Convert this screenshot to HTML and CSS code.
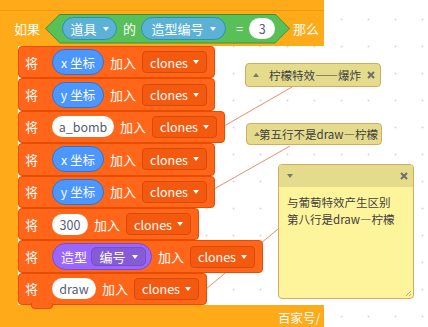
FILE: index.html
```html
<!DOCTYPE html>
<html lang="zh">
<head>
  <meta charset="UTF-8" />
  <title>Scratch 脚本</title>
  <link rel="stylesheet" href="styles.css">
</head>
<body>
  <div class="workspace">
    <svg class="links" width="428" height="327">
      <line x1="292" y1="87" x2="205" y2="137" />
      <line x1="290" y1="146" x2="200" y2="197" />
      <line x1="284" y1="224" x2="200" y2="294" />
    </svg>

    <div class="script">
      <div class="top-stub"></div>

      <div class="c-head">
        <span class="label">如果</span>
        <div class="cond">
          <div class="cond-in">
            <div class="sense w55">道具<i class="arrow"></i></div>
            <span class="label of">的</span>
            <div class="sense w85">造型编号<i class="arrow"></i></div>
            <span class="label eq">=</span>
            <div class="num">3</div>
          </div>
        </div>
        <span class="label then">那么</span>
      </div>

      <div class="c-mid">
        <div class="c-arm"></div>
        <div class="stack">
          <div class="block">
            <span class="label put">将</span>
            <div class="rep w52">x 坐标</div>
            <span class="label add">加入</span>
            <div class="dd">clones<i class="arrow"></i></div>
          </div>
          <div class="block">
            <span class="label put">将</span>
            <div class="rep w52">y 坐标</div>
            <span class="label add">加入</span>
            <div class="dd">clones<i class="arrow"></i></div>
          </div>
          <div class="block">
            <span class="label put">将</span>
            <div class="txt w62">a_bomb</div>
            <span class="label add">加入</span>
            <div class="dd">clones<i class="arrow"></i></div>
          </div>
          <div class="block">
            <span class="label put">将</span>
            <div class="rep w52">x 坐标</div>
            <span class="label add">加入</span>
            <div class="dd">clones<i class="arrow"></i></div>
          </div>
          <div class="block">
            <span class="label put">将</span>
            <div class="rep w52">y 坐标</div>
            <span class="label add">加入</span>
            <div class="dd">clones<i class="arrow"></i></div>
          </div>
          <div class="block">
            <span class="label put">将</span>
            <div class="txt w36">300</div>
            <span class="label add">加入</span>
            <div class="dd">clones<i class="arrow"></i></div>
          </div>
          <div class="block">
            <span class="label put">将</span>
            <div class="looks">
              <span>造型</span>
              <div class="looks-dd">编号<i class="arrow"></i></div>
            </div>
            <span class="label add">加入</span>
            <div class="dd">clones<i class="arrow"></i></div>
          </div>
          <div class="block last">
            <span class="label put">将</span>
            <div class="txt w44">draw</div>
            <span class="label add">加入</span>
            <div class="dd">clones<i class="arrow"></i></div>
          </div>
        </div>
      </div>

      <div class="c-foot"><span class="mark">百家号/</span></div>
    </div>

    <div class="comment c1">
      <i class="tri up"></i>
      <span class="ctext">柠檬特效——爆炸</span>
      <svg class="close" width="8" height="8"><path d="M1 1L7 7M7 1L1 7" /></svg>
    </div>

    <div class="comment c2">
      <i class="tri up"></i>
      <span class="ctext tight">第五行不是draw—柠檬</span>
      <svg class="close" width="8" height="8"><path d="M1 1L7 7M7 1L1 7" /></svg>
    </div>

    <div class="note">
      <div class="note-head">
        <i class="tri down"></i>
        <svg class="close" width="8" height="8"><path d="M1 1L7 7M7 1L1 7" /></svg>
      </div>
      <div class="note-body">
        与葡萄特效产生区别<br>
        第八行是draw—柠檬
      </div>
      <svg class="grip" width="8" height="8"><path d="M7 2L2 7M7 5L5 7" /></svg>
    </div>
  </div>
</body>
</html>
```

FILE: styles.css
```css
* {
  box-sizing: border-box;
}

body {
  margin: 0;
  font-family: "Noto Sans CJK SC", "Noto Sans", sans-serif;
}

.workspace {
  position: relative;
  width: 428px;
  height: 327px;
  overflow: hidden;
  background-color: #fff;
  background-image: radial-gradient(circle, #dcdcdc 0.8px, transparent 1.3px);
  background-size: 27px 27px;
  background-position: 4px 6px;
}

.links {
  position: absolute;
  left: 0;
  top: 0;
  z-index: 0;
}

.links line {
  stroke: #e2906f;
  stroke-width: 1;
}

.script {
  position: relative;
  z-index: 1;
  display: flex;
  flex-direction: column;
}

.label {
  color: #fff;
  font-size: 13px;
  line-height: 1;
  white-space: nowrap;
}

/* control: if ... then */
.top-stub {
  width: 324px;
  height: 11px;
  background: #ffab19;
  border-bottom: 1px solid #eb9c12;
}

.c-head {
  display: flex;
  align-items: center;
  width: 324px;
  height: 35px;
  padding-left: 14px;
  background: #ffab19;
}

.c-head .label {
  margin-right: 5px;
}

.c-head .then {
  margin-left: 3px;
  margin-right: 0;
}

.cond {
  width: 245px;
  height: 30px;
  background: #389438;
  clip-path: polygon(15px 0, calc(100% - 15px) 0, 100% 50%, calc(100% - 15px) 100%, 15px 100%, 0 50%);
}

.cond-in {
  display: flex;
  align-items: center;
  height: 28px;
  margin: 1px;
  padding-left: 16px;
  background: #59c059;
  clip-path: polygon(14px 0, calc(100% - 14px) 0, 100% 50%, calc(100% - 14px) 100%, 14px 100%, 0 50%);
}

.cond-in .of {
  margin: 0 5px 0 6px;
}

.cond-in .eq {
  margin: 0 6px 0 10px;
}

.sense {
  display: flex;
  align-items: center;
  justify-content: center;
  height: 23px;
  border: 1px solid #2e8eb8;
  border-radius: 12px;
  background: #5cb1d6;
  color: #fff;
  font-size: 13px;
}

.num {
  display: flex;
  align-items: center;
  justify-content: center;
  width: 26px;
  height: 21px;
  border-radius: 11px;
  background: #fff;
  color: #575e75;
  font-size: 12.5px;
}

.arrow {
  display: inline-block;
  margin-left: 6px;
  border-left: 3.5px solid transparent;
  border-right: 3.5px solid transparent;
  border-top: 4px solid #fff;
}

.c-mid {
  display: flex;
}

.c-arm {
  width: 18px;
  background: #ffab19;
}

.c-foot {
  width: 324px;
  height: 30px;
  padding-top: 3px;
  padding-left: 278px;
  background: #ffab19;
}

.mark {
  display: block;
  color: #fff;
  font-size: 12.5px;
  white-space: nowrap;
}

/* data: add ... to list */
.stack {
  display: flex;
  flex-direction: column;
  align-items: flex-start;
}

.block {
  position: relative;
  display: flex;
  align-items: center;
  height: 32.4px;
  padding: 0 7px 0 6px;
  background: #ff661a;
  border: 1px solid #e64d00;
  border-radius: 4px;
}

.block.last::after {
  content: "";
  position: absolute;
  left: 12px;
  bottom: -5px;
  width: 20px;
  height: 5px;
  background: #ff661a;
  border: 1px solid #e64d00;
  border-top: none;
  border-radius: 0 0 4px 4px;
}

.block .put {
  margin-right: 14px;
}

.block .add {
  margin: 0 6px;
}

.rep {
  display: flex;
  align-items: center;
  justify-content: center;
  height: 26px;
  border: 1px solid #3373cc;
  border-radius: 13px;
  background: #4c97ff;
  color: #fff;
  font-size: 12.5px;
  white-space: nowrap;
}

.txt {
  display: flex;
  align-items: center;
  justify-content: center;
  height: 21px;
  border-radius: 11px;
  background: #fff;
  color: #575e75;
  font-size: 12.5px;
}

.w36 { width: 36px; }
.w44 { width: 44px; }
.w52 { width: 52px; }
.w55 { width: 55px; }
.w62 { width: 62px; }
.w85 { width: 85px; }

.dd {
  display: flex;
  align-items: center;
  width: 65px;
  height: 22px;
  padding-left: 7px;
  border: 1px solid #d94a06;
  border-radius: 4px;
  background: #f35a0f;
  color: #fff;
  font-size: 12.5px;
}

.dd .arrow {
  margin-left: 5px;
}

.looks {
  display: flex;
  align-items: center;
  width: 100px;
  height: 27px;
  padding-left: 8px;
  border: 1px solid #774dcb;
  border-radius: 14px;
  background: #9966ff;
  color: #fff;
  font-size: 13px;
}

.looks-dd {
  display: flex;
  align-items: center;
  justify-content: center;
  width: 55px;
  height: 19px;
  margin-left: 4px;
  border: 1px solid #774dcb;
  border-radius: 5px;
  background: #855cd6;
}

/* comments */
.comment {
  position: absolute;
  z-index: 2;
  display: flex;
  align-items: center;
  width: 136px;
  padding: 0 5px 0 7px;
  border: 1px solid #d6aa60;
  border-radius: 4px;
  background: #e4db8c;
  color: #3f3f3f;
  font-size: 11.5px;
}

.c1 {
  left: 245px;
  top: 63px;
  height: 24px;
}

.c2 {
  left: 246px;
  top: 123px;
  height: 22px;
}

.ctext {
  margin-left: 10px;
  white-space: nowrap;
}

.ctext.tight {
  margin-left: -1px;
}

.close {
  margin-left: auto;
}

.close path,
.grip path {
  stroke: #6f6f6f;
  stroke-width: 2;
  fill: none;
}

.grip path {
  stroke: #b9ad6e;
  stroke-width: 1;
}

.tri {
  display: inline-block;
  border-left: 3.5px solid transparent;
  border-right: 3.5px solid transparent;
}

.tri.up {
  border-bottom: 4px solid #7a7a6a;
}

.tri.down {
  border-top: 4px solid #7a7a6a;
}

.note {
  position: absolute;
  z-index: 2;
  left: 278px;
  top: 164px;
  width: 136px;
  height: 135px;
  border: 1px solid #d6aa60;
  border-radius: 4px;
  background: #fef49c;
  overflow: hidden;
}

.note-head {
  display: flex;
  align-items: center;
  height: 22px;
  padding: 0 5px 0 8px;
  background: #e4db8c;
}

.note-body {
  padding: 7px 8px;
  color: #3f3f3f;
  font-size: 11.5px;
  line-height: 17px;
}

.grip {
  position: absolute;
  right: 1px;
  bottom: 1px;
}
```
